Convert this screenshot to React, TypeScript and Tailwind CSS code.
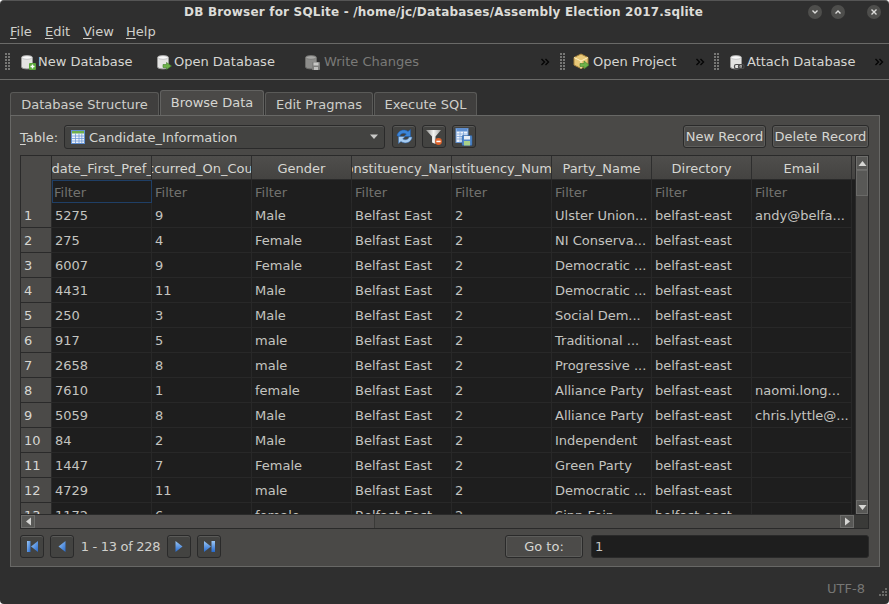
import React from "react";

const rows: string[][] = [
  ["1", "5275", "9", "Male", "Belfast East", "2", "Ulster Union...", "belfast-east", "andy@belfa..."],
  ["2", "275", "4", "Female", "Belfast East", "2", "NI Conserva...", "belfast-east", ""],
  ["3", "6007", "9", "Female", "Belfast East", "2", "Democratic ...", "belfast-east", ""],
  ["4", "4431", "11", "Male", "Belfast East", "2", "Democratic ...", "belfast-east", ""],
  ["5", "250", "3", "Male", "Belfast East", "2", "Social Dem...", "belfast-east", ""],
  ["6", "917", "5", "male", "Belfast East", "2", "Traditional ...", "belfast-east", ""],
  ["7", "2658", "8", "male", "Belfast East", "2", "Progressive ...", "belfast-east", ""],
  ["8", "7610", "1", "female", "Belfast East", "2", "Alliance Party", "belfast-east", "naomi.long..."],
  ["9", "5059", "8", "Male", "Belfast East", "2", "Alliance Party", "belfast-east", "chris.lyttle@..."],
  ["10", "84", "2", "Male", "Belfast East", "2", "Independent", "belfast-east", ""],
  ["11", "1447", "7", "Female", "Belfast East", "2", "Green Party", "belfast-east", ""],
  ["12", "4729", "11", "male", "Belfast East", "2", "Democratic ...", "belfast-east", ""],
  ["13", "1172", "6", "female", "Belfast East", "2", "Sinn Fein", "belfast-east", ""],
];
const headers = ["Candidate_First_Pref_Votes", "Occurred_On_Count", "Gender", "Constituency_Name", "Constituency_Number", "Party_Name", "Directory", "Email"];

function Cylinder({ dim }: { dim?: boolean }) {
  return (
    <>
      <path d="M1.5 3.5C1.5 1 12.5 1 12.5 3.5V13C12.5 15.5 1.5 15.5 1.5 13Z" fill={dim ? "#8c8c8a" : "#e4e4e2"} stroke={dim ? "#6c6c6a" : "#9a9a98"} />
      <ellipse cx="7" cy="3.5" rx="5" ry="1.8" fill={dim ? "#a8a8a6" : "#fafafa"} stroke={dim ? "#6c6c6a" : "#a8a8a8"} strokeWidth="0.6" />
    </>
  );
}
function NewDbIcon() {
  return (
    <svg width="16" height="16" viewBox="0 0 16 16" className="shrink-0">
      <Cylinder />
      <rect x="9" y="9" width="7" height="7" rx="1" fill="#5aa83a" />
      <path d="M12.5 10.5V14.5M10.5 12.5H14.5" stroke="#fff" strokeWidth="1.4" />
    </svg>
  );
}
function OpenDbIcon() {
  return (
    <svg width="16" height="16" viewBox="0 0 16 16" className="shrink-0">
      <Cylinder />
      <path d="M7 10.5H10.5V8.5L15.5 12L10.5 15.5V13.5H7Z" fill="#6db14a" stroke="#3f7f2a" strokeWidth="0.6" />
    </svg>
  );
}
function WriteIcon() {
  return (
    <svg width="16" height="16" viewBox="0 0 16 16" className="shrink-0">
      <Cylinder dim />
      <rect x="8" y="8" width="8" height="8" rx="0.8" fill="#7e7e7c" />
      <rect x="9.5" y="8.5" width="5" height="3" fill="#c8c8c6" />
      <rect x="10" y="13" width="4" height="3" fill="#c0c0be" />
    </svg>
  );
}
function ProjectIcon() {
  return (
    <svg width="17" height="17" viewBox="0 0 17 17" className="shrink-0">
      <path d="M8 1L15 4.5V12L8 15.5L1 12V4.5Z" fill="#e8c878" stroke="#a8843c" />
      <path d="M1 4.5L8 8L15 4.5M8 8V15.5" fill="none" stroke="#fff0c0" strokeWidth="1" />
      <path d="M7 10.5H11V8L16 12L11 16V13.5H7Z" fill="#6db14a" stroke="#3f7f2a" strokeWidth="0.6" />
    </svg>
  );
}
function AttachIcon() {
  return (
    <svg width="16" height="16" viewBox="0 0 16 16" className="shrink-0">
      <Cylinder />
      <rect x="5.5" y="10.5" width="5.5" height="4" rx="1.6" fill="none" stroke="#4c4c4c" strokeWidth="1.2" />
      <rect x="9.5" y="10.5" width="5.5" height="4" rx="1.6" fill="none" stroke="#4c4c4c" strokeWidth="1.2" />
    </svg>
  );
}
function TableIcon() {
  return (
    <svg width="14" height="14" viewBox="0 0 14 14" className="shrink-0">
      <rect x="0.5" y="0.5" width="13" height="13" fill="#eef3fb" stroke="#5f8fd0" />
      <rect x="1" y="1" width="12" height="2.5" fill="#6fb04a" />
      <path d="M1 6H13M1 8.5H13M1 11H13M4.5 3.5V13M8 3.5V13M10.8 3.5V13" stroke="#6f9ad8" strokeWidth="0.8" />
    </svg>
  );
}
function RefreshIcon() {
  return (
    <svg width="17" height="17" viewBox="0 0 17 17">
      <path d="M1 8C1.2 3.5 7 0 12 3.5L14.5 1.5V8.5H8L10.3 6C7.5 4.5 4.5 5.500 4 8Z" fill="#3d86d8" stroke="#1f5aa8" strokeWidth="0.5" />
      <path d="M16 9C15.8 13.5 10 17 5 13.5L2.5 15.5V8.5H9L6.7 11C9.5 12.5 12.5 11.5 13 9Z" fill="#a8ccf0" stroke="#2f6cb8" strokeWidth="0.5" />
    </svg>
  );
}
function FilterIcon() {
  return (
    <svg width="18" height="18" viewBox="0 0 18 18">
      <defs>
        <linearGradient id="funnel" x1="0" y1="0" x2="1" y2="0">
          <stop offset="0" stopColor="#8e8e8c" />
          <stop offset="0.5" stopColor="#f4f4f2" />
          <stop offset="1" stopColor="#a4a4a2" />
        </linearGradient>
      </defs>
      <path d="M1 2H16L10.500 8.5V16L7 14.5V8.5Z" fill="url(#funnel)" />
      <circle cx="13.5" cy="13.5" r="3.4" fill="#e0622a" />
      <rect x="11.4" y="12.7" width="4.2" height="1.5" fill="#fff" />
    </svg>
  );
}
function SaveTableIcon() {
  return (
    <svg width="18" height="18" viewBox="0 0 18 18">
      <rect x="1" y="0.5" width="12" height="14" fill="#eef3fb" stroke="#5f8fd0" />
      <rect x="1.5" y="1" width="11" height="2.5" fill="#5f8fd0" />
      <path d="M1.5 6H12.5M1.5 8.5H12.5M1.5 11H12.5M5 3.5V14M8.5 3.5V14" stroke="#7fa6dc" strokeWidth="0.8" />
      <rect x="7" y="7.5" width="10" height="10" rx="0.8" fill="#4f86c8" stroke="#2c5c9c" strokeWidth="0.5" />
      <rect x="9" y="8" width="6" height="3.5" fill="#e8eef6" />
      <rect x="9" y="13" width="6" height="4.5" fill="#a8d088" />
    </svg>
  );
}
function NavIcon({ kind }: { kind: "first" | "prev" | "next" | "last" }) {
  const paths = {
    first: { tri: "M12 1V12L5 6.5Z", bar: 1 },
    prev: { tri: "M9.5 1V12L2.5 6.5Z", bar: -1 },
    next: { tri: "M2.5 1V12L9.5 6.5Z", bar: -1 },
    last: { tri: "M1 1V12L8 6.5Z", bar: 8.5 },
  }[kind];
  const left = kind === "first" || kind === "prev";
  return (
    <svg width="13" height="13" viewBox="0 0 13 13">
      <defs>
        <linearGradient id={`g-${kind}`} x1="0" y1="0" x2={left ? "1" : "0"} y2="1">
          <stop offset="0" stopColor="#9cc8f6" />
          <stop offset="1" stopColor="#2468cc" />
        </linearGradient>
      </defs>
      <path d={paths.tri} fill={`url(#g-${kind})`} />
      {paths.bar > 0 && <rect x={paths.bar} y="1" width="3.5" height="11" fill={`url(#g-${kind})`} />}
    </svg>
  );
}
function Grip() {
  const col = "w-[2px] h-[17px] bg-[repeating-linear-gradient(to_bottom,#777775_0,#777775_2px,#2f2f2f_2px,#2f2f2f_3px)]";
  return (
    <div className="w-[5px] shrink-0 flex gap-[1px]">
      <div className={col} />
      <div className={col} />
    </div>
  );
}
function Chevrons() {
  return (
    <svg width="9" height="8" viewBox="0 0 9 8" className="shrink-0">
      <path d="M0.5 1L3.5 4L0.5 7M4.5 1L7.5 4L4.5 7" fill="none" stroke="#050505" strokeWidth="1.4" />
    </svg>
  );
}
function WinBtn({ d }: { d: string }) {
  return (
    <div className="w-[14px] h-[14px] rounded-full bg-[#4e4e4c] flex items-center justify-center">
      <svg width="8" height="8" viewBox="0 0 8 8">
        <path d={d} fill="none" stroke="#dcdcda" strokeWidth="1.4" />
      </svg>
    </div>
  );
}
function ToolBtn({ children, label, dim, w, gap }: { children: React.ReactNode; label: string; dim?: boolean; w: string; gap: string }) {
  return (
    <div className={`${w} ${gap} shrink-0 flex items-center ${dim ? "text-[#7a7a78]" : "text-[#d6d6d2]"}`}>
      {children}
      <span className="whitespace-nowrap">{label}</span>
    </div>
  );
}
function IconBtn({ children }: { children: React.ReactNode }) {
  return (
    <div className="w-[24px] h-[23px] shrink-0 rounded-[3px] border border-[#2a2a2a] bg-[#434341] shadow-[inset_0_1px_0_#5a5a58] flex items-center justify-center">
      {children}
    </div>
  );
}
function Button({ label, w }: { label: string; w: string }) {
  return (
    <div className={`${w} h-[23px] shrink-0 rounded-[3px] border border-[#2a2a2a] bg-[#4c4b49] shadow-[inset_0_0_0_1px_#5c5c5a] flex items-center justify-center text-[#d6d6d2] whitespace-nowrap`}>
      {label}
    </div>
  );
}
function Tab({ label, w, active }: { label: string; w: string; active?: boolean }) {
  return active ? (
    <div className={`${w} h-[25px] rounded-t-[3px] border border-[#626260] border-b-0 bg-[#4a4947] flex items-center justify-center text-[#d6d6d2] pb-[2px]`}>
      {label}
    </div>
  ) : (
    <div className={`${w} h-[23px] rounded-t-[3px] border border-[#5a5a58] border-b-0 bg-[#403f3e] flex items-center justify-center text-[#cfcfcb]`}>
      {label}
    </div>
  );
}
function ArrowBtn({ d, cls }: { d: string; cls: string }) {
  return (
    <div className={`${cls} shrink-0 bg-[#585856] border border-[#6e6e6c] flex items-center justify-center`}>
      <svg width="9" height="9" viewBox="0 0 9 9">
        <path d={d} fill="#d6d6d4" />
      </svg>
    </div>
  );
}

export default function App() {
  return (
    <div className="w-[889px] h-[604px] overflow-hidden bg-white">
      <div className="w-full h-full flex flex-col bg-[#2f2f2f] rounded-[4px] border-t border-[#555] font-['DejaVu_Sans',sans-serif] text-[13px] leading-none text-[#d6d6d2]">
        {/* Title */}
        <div className="h-[21px] shrink-0 flex items-center pl-[184px] pr-[8px]">
          <span className="font-bold text-[12px] tracking-[0.2px] text-[#dcdcd8] whitespace-nowrap">DB Browser for SQLite - /home/jc/Databases/Assembly Election 2017.sqlite</span>
          <div className="ml-auto flex items-center">
            <WinBtn d="M1.5 2.5L4 5L6.5 2.5" />
            <div className="w-[9px]" />
            <WinBtn d="M1.5 5.5L4 3L6.5 5.5" />
            <div className="w-[22px]" />
            <WinBtn d="M1.5 1.5L6.5 6.5M6.5 1.5L1.5 6.5" />
          </div>
        </div>
        {/* Menu */}
        <div className="h-[22px] shrink-0 flex items-center pl-[10px] border-b border-[#6a6a68] pb-[2px] text-[#d0d0cc]">
          <span className="w-[35px]"><span className="underline underline-offset-2">F</span>ile</span>
          <span className="w-[38px]"><span className="underline underline-offset-2">E</span>dit</span>
          <span className="w-[43px]"><span className="underline underline-offset-2">V</span>iew</span>
          <span><span className="underline underline-offset-2">H</span>elp</span>
        </div>
        {/* Toolbar */}
        <div className="h-[36px] shrink-0 flex items-center border-b border-[#6a6a68] pl-[5px]">
          <Grip />
          <div className="w-[10px]" />
          <ToolBtn label="New Database" w="w-[136px]" gap="gap-[2px]"><NewDbIcon /></ToolBtn>
          <ToolBtn label="Open Database" w="w-[148px]" gap="gap-[2px]"><OpenDbIcon /></ToolBtn>
          <ToolBtn label="Write Changes" w="w-[237px]" gap="gap-[4px]" dim><WriteIcon /></ToolBtn>
          <Chevrons />
          <div className="w-[10px]" />
          <Grip />
          <div className="w-[8px]" />
          <ToolBtn label="Open Project" w="w-[123px]" gap="gap-[3px]"><ProjectIcon /></ToolBtn>
          <Chevrons />
          <div className="w-[9px]" />
          <Grip />
          <div className="w-[10px]" />
          <ToolBtn label="Attach Database" w="w-[146px]" gap="gap-[2px]"><AttachIcon /></ToolBtn>
          <Chevrons />
        </div>
        {/* Tabs */}
        <div className="h-[35px] shrink-0 flex items-end pl-[10px] gap-[1px]">
          <Tab label="Database Structure" w="w-[149px]" />
          <Tab label="Browse Data" w="w-[104px]" active />
          <Tab label="Edit Pragmas" w="w-[108px]" />
          <Tab label="Execute SQL" w="w-[103px]" />
        </div>
        {/* Panel */}
        <div className="mx-[10px] w-[870px] h-[452px] shrink-0 border border-[#686866] bg-[#4a4947] flex flex-col px-[9px] pt-[9px]">
          {/* Controls */}
          <div className="flex items-start h-[25px] shrink-0">
            <span className="w-[44px] shrink-0 self-center"><span className="underline underline-offset-2">T</span>able:</span>
            <div className="w-[321px] h-[24px] shrink-0 rounded-[3px] border border-[#2a2a2a] bg-[#434341] shadow-[inset_0_1px_0_#5a5a58] flex items-center pl-[6px] pr-[4px] gap-[4px]">
              <TableIcon />
              <span>Candidate_Information</span>
              <svg width="10" height="6" viewBox="0 0 10 6" className="ml-auto mr-[1px]"><path d="M1 0.5H9L5 5Z" fill="#c8c8c6" /></svg>
            </div>
            <div className="w-[7px]" />
            <IconBtn><RefreshIcon /></IconBtn>
            <div className="w-[6px]" />
            <IconBtn><FilterIcon /></IconBtn>
            <div className="w-[6px]" />
            <IconBtn><SaveTableIcon /></IconBtn>
            <div className="ml-auto mr-[1px] flex gap-[6px]">
              <Button label="New Record" w="w-[83px]" />
              <Button label="Delete Record" w="w-[97px]" />
            </div>
          </div>
          {/* Table */}
          <div className="mt-[5px] w-[849px] h-[374px] shrink-0 border border-[#2a2a2a] flex flex-col bg-[#3a3a38]">
            <div className="flex h-[358px] shrink-0">
              <div className="w-[834px] h-[358px] shrink-0 overflow-hidden flex flex-col bg-[#1e1e1e]">
                {/* Header + filter */}
                <div className="flex h-[47px] shrink-0">
                  <div className="w-[31px] h-[47px] shrink-0 bg-[#4b4a48] border-r border-[#2a2a2a]" />
                  <div className="flex flex-col flex-1 min-w-0">
                    <div className="flex h-[24px] shrink-0 border-b border-[#2a2a2a] bg-gradient-to-b from-[#4f4e4c] to-[#444341]">
                      {headers.map((h) => (
                        <div key={h} className="w-[100px] shrink-0 border-r border-[#2e2e2e] flex justify-center overflow-hidden items-center pt-[2px] text-[#d6d6d2]">
                          <span className="whitespace-nowrap shrink-0">{h}</span>
                        </div>
                      ))}
                    </div>
                    <div className="flex h-[23px] shrink-0 bg-[#1e1e1e]">
                      {headers.map((h, i) => (
                        <div key={h} className={`w-[100px] shrink-0 flex items-center pt-[2px] text-[#72726f] border-r ${i === 0 ? "border border-[#1f3f66] pl-[1px]" : "border-[#2a2a2a] pl-[3px]"}`}>
                          Filter
                        </div>
                      ))}
                    </div>
                  </div>
                </div>
                {/* Rows */}
                {rows.map((r) => (
                  <div key={r[0]} className="flex h-[25px] shrink-0">
                    <div className="w-[31px] shrink-0 bg-[#4b4a48] border-r border-b border-[#2a2a2a] flex items-center pl-[3px] text-[#d6d6d2]">{r[0]}</div>
                    {r.slice(1).map((c, i) => (
                      <div key={i} className="w-[100px] shrink-0 border-r border-b border-[#282828] flex items-center pl-[3px] text-[#c4c4c0] whitespace-nowrap overflow-hidden">
                        {c}
                      </div>
                    ))}
                  </div>
                ))}
              </div>
              {/* Vertical scrollbar */}
              <div className="w-[13px] shrink-0 flex flex-col bg-[#4c4b49] border-l border-[#2a2a2a]">
                <ArrowBtn cls="w-full h-[14px]" d="M4.5 2L8.5 7H0.5Z" />
                <div className="w-full h-[26px] shrink-0 bg-[#585856] border border-[#6a6a68]" />
                <div className="flex-1" />
                <ArrowBtn cls="w-full h-[14px]" d="M0.5 2H8.5L4.5 7Z" />
              </div>
            </div>
            {/* Horizontal scrollbar */}
            <div className="flex h-[14px] shrink-0 border-t border-[#2a2a2a] bg-[#4c4b49]">
              <ArrowBtn cls="w-[14px] h-full" d="M7 0.5V8.5L2 4.5Z" />
              <div className="w-[340px] shrink-0 bg-[#514f4e] border-r border-[#3a3a38]" />
              <div className="flex-1" />
              <ArrowBtn cls="w-[14px] h-full" d="M2 0.5V8.5L7 4.5Z" />
              <div className="w-[14px] shrink-0 bg-[#3a3a38]" />
            </div>
          </div>
          {/* Pagination */}
          <div className="mt-[6px] flex items-center h-[23px] shrink-0">
            <IconBtn><NavIcon kind="first" /></IconBtn>
            <div className="w-[6px]" />
            <IconBtn><NavIcon kind="prev" /></IconBtn>
            <span className="w-[93px] shrink-0 text-center text-[#d0d0cc] whitespace-nowrap tracking-[-0.3px]">1 - 13 of 228</span>
            <IconBtn><NavIcon kind="next" /></IconBtn>
            <div className="w-[6px]" />
            <IconBtn><NavIcon kind="last" /></IconBtn>
            <div className="w-[284px]" />
            <Button label="Go to:" w="w-[78px]" />
            <div className="w-[8px]" />
            <div className="w-[278px] h-[23px] shrink-0 rounded-[3px] bg-[#1e1e1e] border border-[#2a2a2a] flex items-center pl-[3px] text-[#c8c8c4]">1</div>
          </div>
        </div>
        {/* Status */}
        <div className="flex-1 flex items-center justify-end text-[#767674] pt-[6px]">
          <span>UTF-8</span>
          <svg width="10" height="10" viewBox="0 0 10 10" className="ml-[12px] mr-[2px] mt-[8px]">
            <path d="M8 0h2v2H8zM5 3h2v2H5zM8 3h2v2H8zM2 6h2v2H2zM5 6h2v2H5zM8 6h2v2H8z" fill="#6a6a68" />
          </svg>
        </div>
      </div>
    </div>
  );
}
